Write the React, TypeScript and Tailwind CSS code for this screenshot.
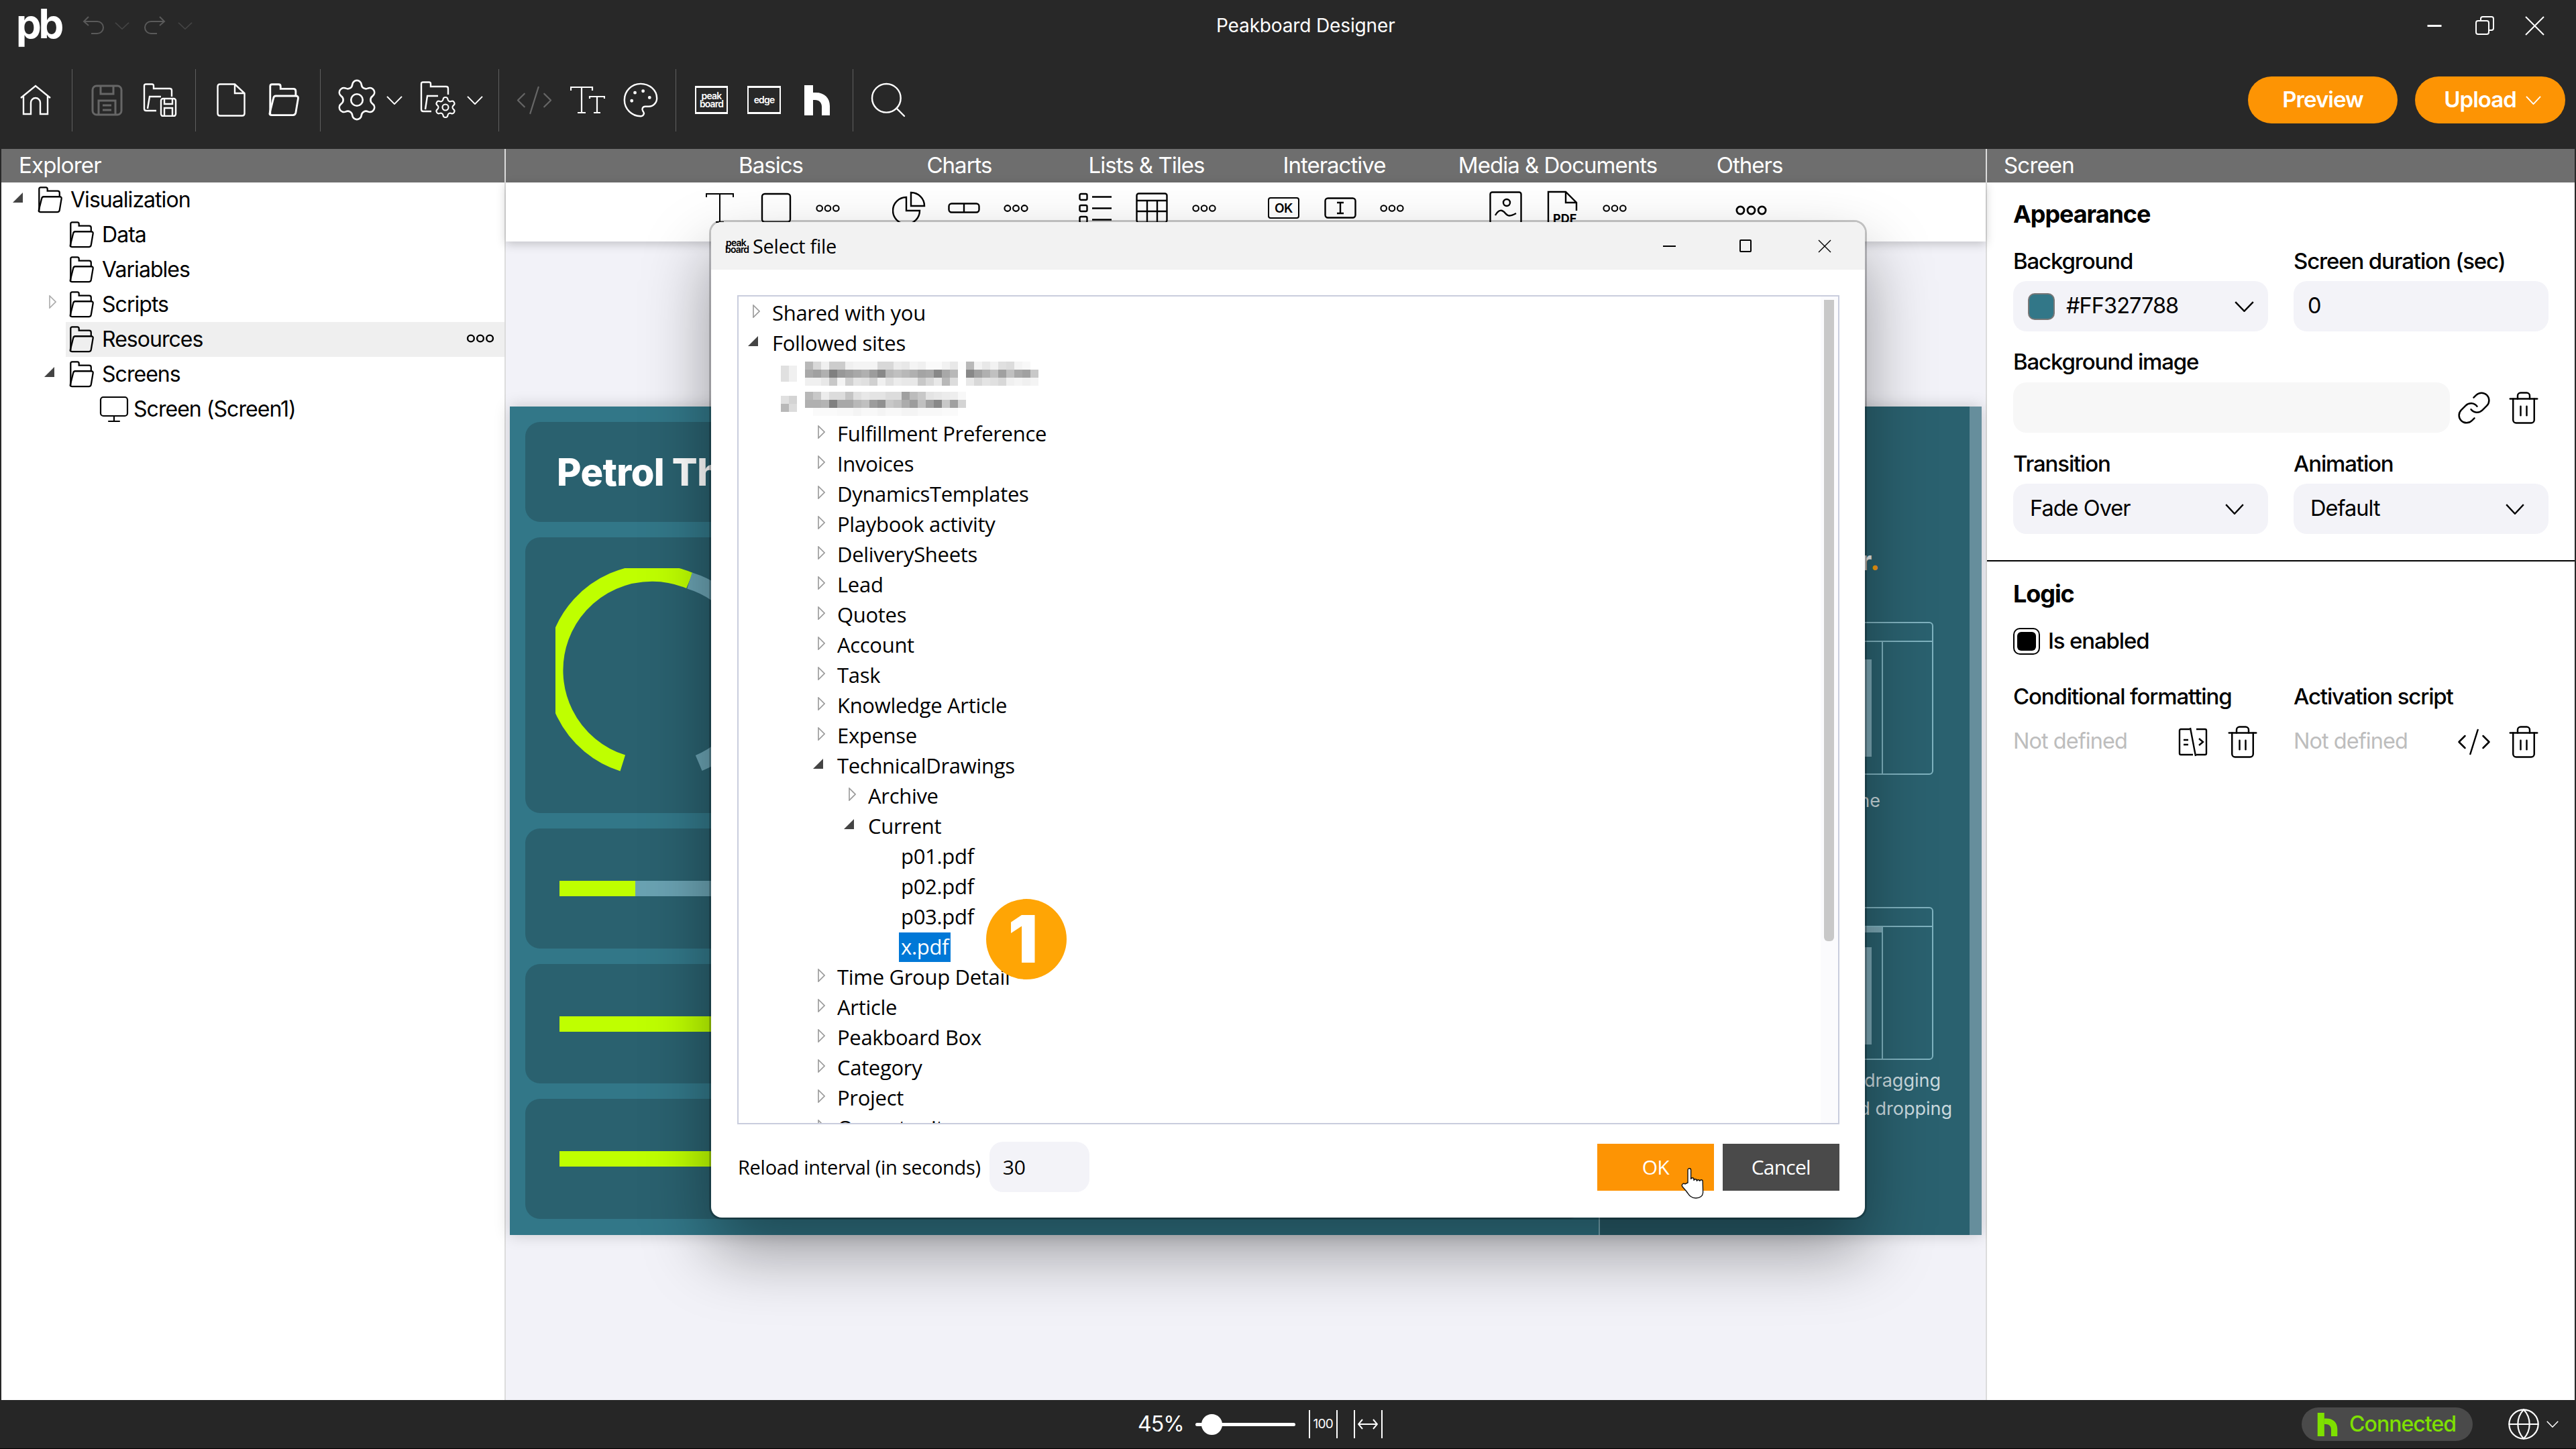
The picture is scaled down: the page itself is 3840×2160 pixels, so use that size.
import { CodeXml, Globe, Link, Monitor, Palette, Search, Settings, Trash2 } from 'lucide-react';

type IconProps = { className?: string };

function Caret({ className = '' }: IconProps) {
  return (
    <svg viewBox="0 0 24 14" fill="none" stroke="currentColor" strokeWidth="2" preserveAspectRatio="none" className={className} aria-hidden>
      <path d="M1 1 L12 13 L23 1" />
    </svg>
  );
}

function FolderIcon({ className = '' }: IconProps) {
  return (
    <svg viewBox="0 0 40 42" fill="none" stroke="currentColor" strokeWidth="2.4" className={className} aria-hidden>
      <path d="M3 39 V4 q0-2.5 2.5-2.5 h8 q2.5 0 2.5 2.5 v3 h16 q3 0 3 3 v6" />
      <path d="M10 16 H35 q3.5 0 3 3 L35 37 q-.6 3-3.5 3 H5 q-3.4 0-2.5-3 L7 19 q.6-3 3-3 Z" />
    </svg>
  );
}

function HLogo({ className = '' }: IconProps) {
  return (
    <svg viewBox="0 0 38 45" fill="currentColor" className={className} aria-hidden>
      <path d="M0 0 H13 V45 H0 Z" />
      <path d="M13 11 H17 C30 11 38 19 38 31 V45 H26 V32 C26 26 22 22 16 22 H13 Z" />
    </svg>
  );
}

function PeakBox({ children }: { children: React.ReactNode }) {
  return (
    <div className="flex h-[42px] w-full flex-col items-center justify-center border-x-2 border-y-[3px] border-white text-center text-[14px] font-semibold leading-[12px] tracking-[-0.06em]">
      {children}
    </div>
  );
}

function Dots({ className = '' }: IconProps) {
  return (
    <svg viewBox="0 0 38 12" fill="none" stroke="currentColor" strokeWidth="2.2" className={className} aria-hidden>
      <ellipse cx="6" cy="6" rx="4.5" ry="4.5" />
      <ellipse cx="19" cy="6" rx="4.5" ry="4.5" />
      <ellipse cx="32" cy="6" rx="4.5" ry="4.5" />
    </svg>
  );
}

function Sep({ className = '' }: IconProps) {
  return <div className={`h-[93px] w-px shrink-0 bg-[#5f5f5f] ${className}`} />;
}

function TopBar() {
  return (
    <div className="h-[222px] shrink-0 bg-[#282828] text-white">
      <div className="flex h-[76px] items-center">
        <div className="ml-[24px] w-[66px] text-[60px] font-bold leading-none tracking-[-0.07em] -translate-y-[3px]">pb</div>
        <svg viewBox="0 0 32 28" fill="none" stroke="#5a5a5a" strokeWidth="2" className="ml-[33px] h-[28px] w-[32px]" aria-hidden>
          <path d="M9 1 L2 8 L9 14 M2 8 H22 a8 8 0 0 1 0 18 H13" />
        </svg>
        <Caret className="ml-[16px] h-[11px] w-[22px] text-[#444]" />
        <svg viewBox="0 0 32 28" fill="none" stroke="#5a5a5a" strokeWidth="2" className="ml-[22px] h-[28px] w-[32px]" aria-hidden>
          <path d="M23 1 L30 8 L23 14 M30 8 H10 a8 8 0 0 0 0 18 H19" />
        </svg>
        <Caret className="ml-[18px] h-[11px] w-[22px] text-[#444]" />
        <div className="ml-[1526px] whitespace-nowrap text-[28px] tracking-[-0.005em]">Peakboard Designer</div>
        <svg viewBox="0 0 28 4" className="ml-auto h-[3px] w-[28px]" fill="currentColor" aria-hidden>
          <rect width="28" height="4" />
        </svg>
        <svg viewBox="0 0 28 28" fill="none" stroke="currentColor" strokeWidth="2" className="ml-[47px] h-[28px] w-[28px]" aria-hidden>
          <rect x="1" y="7" width="19" height="20" rx="3" />
          <path d="M8 7 V4 q0-3 3-3 h13 q3 0 3 3 v14 q0 3-3 3 h-4" />
        </svg>
        <svg viewBox="0 0 29 29" fill="none" stroke="currentColor" strokeWidth="2" className="ml-[46px] mr-[47px] h-[29px] w-[29px]" aria-hidden>
          <path d="M1 1 L28 28 M28 1 L1 28" />
        </svg>
      </div>
      <div className="flex h-[146px] items-center">
        <svg viewBox="0 0 48 46" fill="none" stroke="currentColor" strokeWidth="2.4" className="ml-[29px] h-[46px] w-[48px]" aria-hidden>
          <path d="M2 20 L24 2 L46 20 M6 17 V44 H17 V27 a7 7 0 0 1 14 0 V44 H42 V17" />
        </svg>
        <Sep className="ml-[30px]" />
        <svg viewBox="0 0 47 47" fill="none" stroke="#666" strokeWidth="3" className="ml-[28px] h-[47px] w-[47px]" aria-hidden>
          <rect x="2" y="2" width="43" height="43" rx="6" />
          <path d="M14 2 V14 H33 V2 M11 45 V24 H36 V45 M17 31 H30 M17 38 H30" />
        </svg>
        <svg viewBox="0 0 52 50" fill="none" stroke="currentColor" strokeWidth="2.4" className="ml-[29px] h-[50px] w-[52px]" aria-hidden>
          <path d="M3 38 V4 q0-2.5 2.5-2.5 h9 q2.5 0 2.5 2.5 v4 h24 q3 0 3 3 v9 M3 38 q0 3 3 3 h15 M8 38 L11 20 h17" />
          <rect x="28" y="23" width="22" height="26" rx="3" />
          <path d="M33 23 V31 H45 V23 M33 49 V37 H45 V49" />
        </svg>
        <Sep className="ml-[27px]" />
        <svg viewBox="0 0 43 50" fill="none" stroke="currentColor" strokeWidth="2.4" className="ml-[31px] h-[50px] w-[43px]" aria-hidden>
          <path d="M5 1.5 H27 L41.5 15 V45 q0 3.5-3.5 3.5 H5 q-3.5 0-3.5-3.5 V5 q0-3.5 3.5-3.5 Z M27 1.5 V15 H41.5" />
        </svg>
        <FolderIcon className="ml-[32px] h-[50px] w-[50px]" />
        <Sep className="ml-[29px]" />
        <Settings strokeWidth={0.9} className="ml-[19px] h-[70px] w-[70px]" />
        <Caret className="ml-[9px] h-[13px] w-[24px]" />
        <svg viewBox="0 0 55 56" fill="none" stroke="currentColor" strokeWidth="2.4" className="ml-[25px] h-[56px] w-[55px]" aria-hidden>
          <path d="M3 42 V4 q0-2.5 2.5-2.5 h9 q2.5 0 2.5 2.5 v4 h23 q3 0 3 3 v9 M3 42 q0 3 3 3 h12 M9 42 L12 22 h16" />
          <Settings x={21} y={21} width={36} height={36} strokeWidth={1.4} />
        </svg>
        <Caret className="ml-[16px] h-[13px] w-[24px]" />
        <Sep className="ml-[23px]" />
        <CodeXml strokeWidth={0.9} className="ml-[23px] h-[59px] w-[59px] text-[#666]" />
        <svg viewBox="0 0 52 42" fill="none" stroke="currentColor" strokeWidth="2.2" className="ml-[24px] h-[42px] w-[52px]" aria-hidden>
          <path d="M1 7 V2 H33 V7 M17 2 V40 M11 40 H23 M29 19 V16 H51 V19 M40 16 V40 M35 40 H45" />
        </svg>
        <Palette strokeWidth={1} className="ml-[24px] h-[58px] w-[58px]" />
        <Sep className="ml-[23px]" />
        <div className="ml-[28px] w-[49px]">
          <PeakBox>
            <span>peak</span>
            <span>board</span>
          </PeakBox>
        </div>
        <div className="ml-[29px] w-[50px]">
          <PeakBox>
            <span>edge</span>
          </PeakBox>
        </div>
        <HLogo className="ml-[35px] h-[45px] w-[38px]" />
        <Sep className="ml-[34px]" />
        <Search strokeWidth={0.9} className="ml-[20px] h-[64px] w-[64px]" />
        <button className="ml-auto flex h-[70px] w-[223px] items-center justify-center rounded-full bg-[#fd9404] text-[33px] font-semibold tracking-[-0.03em]">
          Preview
        </button>
        <button className="ml-[26px] mr-[16px] flex h-[70px] w-[224px] items-center justify-center gap-[14px] rounded-full bg-[#fd9404] pl-[7px] text-[33px] font-semibold tracking-[-0.03em]">
          Upload
          <Caret className="h-[13px] w-[23px]" />
        </button>
      </div>
    </div>
  );
}

function ExplorerRow({ label, indent, icon, expand, active }: { label: string; indent: string; icon?: React.ReactNode; expand?: 'open' | 'closed'; active?: boolean }) {
  return (
    <div className={`relative flex h-[52px] items-center ${indent}`}>
      {active && <div className="absolute inset-y-0 left-[96px] right-0 bg-[#efefef]" />}
      <div className="relative flex items-center">
        {expand === 'open' && (
          <svg viewBox="0 0 15 15" className="absolute left-[-36px] top-[13px] h-[15px] w-[15px] fill-[#444]" aria-hidden>
            <path d="M15 0 V15 H0 Z" />
          </svg>
        )}
        {expand === 'closed' && (
          <svg viewBox="0 0 11 20" className="absolute left-[-29px] top-[10px] h-[20px] w-[11px] fill-none stroke-[#aaa]" strokeWidth="1.6" aria-hidden>
            <path d="M1 1 L10 10 L1 19 Z" />
          </svg>
        )}
        {icon ?? <FolderIcon className="h-[40px] w-[39px]" />}
        <span className="ml-[11px] whitespace-nowrap text-[32px] tracking-[-0.03em]">{label}</span>
      </div>
    </div>
  );
}

function Explorer() {
  return (
    <div className="flex w-[750px] shrink-0 flex-col bg-white text-black">
      <div className="flex h-[50px] shrink-0 items-center bg-[#6e6e6e] pl-[26px] text-[33px] tracking-[-0.025em] text-white">Explorer</div>
      <div className="relative">
        <ExplorerRow label="Visualization" indent="pl-[53px]" expand="open" />
        <ExplorerRow label="Data" indent="pl-[100px]" />
        <ExplorerRow label="Variables" indent="pl-[100px]" />
        <ExplorerRow label="Scripts" indent="pl-[100px]" expand="closed" />
        <div className="relative">
          <ExplorerRow label="Resources" indent="pl-[100px]" active />
          <Dots className="absolute right-[15px] top-[18px] h-[13px] w-[42px]" />
        </div>
        <ExplorerRow label="Screens" indent="pl-[100px]" expand="open" />
        <ExplorerRow label="Screen (Screen1)" indent="pl-[144px]" icon={<Monitor strokeWidth={1.1} className="mr-[-6px] h-[48px] w-[48px]" />} />
      </div>
    </div>
  );
}

function WireBox({ thick }: { thick?: boolean }) {
  return (
    <div className="mr-[54px] flex h-[228px] w-[442px] flex-col self-end rounded-[6px] border-2 border-[#7fb2bf]">
      <div className="h-[28px] shrink-0 border-b-2 border-[#7fb2bf]" />
      <div className="flex flex-1">
        <div className={`flex flex-1 items-center justify-end pr-[15px] ${thick ? 'border-t-[8px] border-[#7aa6b3]' : ''}`}>
          <div className="h-[145px] w-[220px] bg-[#7aa6b3]" />
        </div>
        <div className="w-[75px] border-l-2 border-[#7fb2bf]" />
      </div>
    </div>
  );
}

function Preview() {
  return (
    <div className="flex h-[1235px] w-[2194px] bg-[#327788] shadow-[0_0_22px_rgba(0,0,0,0.18)]">
      <div className="flex w-[1623px] shrink-0 flex-col gap-[23px] p-[23px] text-white">
        <div className="flex h-[149px] items-center rounded-[22px] bg-[#2a616f] pl-[47px]">
          <span className="text-[56px] font-extrabold leading-none tracking-[-0.01em]">Petrol Th</span>
        </div>
        <div className="h-[411px] rounded-[22px] bg-[#2a616f] pl-[45px] pt-[46px]">
          <svg viewBox="0 0 314 314" fill="none" strokeWidth="25" className="h-[314px] w-[314px]" aria-hidden>
            <path d="M100.3 290.5 A145 145 0 1 1 200 18.5" stroke="#bfff00" />
            <path d="M200 18.5 A145 145 0 0 1 213.7 290.5" stroke="#6aa2b2" />
          </svg>
        </div>
        <div className="flex h-[179px] items-center rounded-[22px] bg-[#2a616f] pl-[51px]">
          <div className="h-[23px] w-[1400px] bg-[#6aa2b2]">
            <div className="h-full w-[113px] bg-[#bfff00]" />
          </div>
        </div>
        <div className="flex h-[178px] items-center rounded-[22px] bg-[#2a616f] pl-[51px]">
          <div className="h-[23px] w-[1400px] bg-[#bfff00]" />
        </div>
        <div className="flex h-[179px] items-center rounded-[22px] bg-[#2a616f] pl-[51px]">
          <div className="h-[23px] w-[1400px] bg-[#bfff00]" />
        </div>
      </div>
      <div className="flex flex-1 flex-col border-l-2 border-[#7fb2bf] bg-[#2a616f] text-[#c9d9de]">
        <div className="mr-[134px] mt-[206px] self-end text-[40px] font-extrabold leading-[48px] text-[#e6eaeb]">
          Designer<span className="text-[#f39a12]">.</span>
        </div>
        <div className="mt-[67px]" />
        <WireBox />
        <div className="mr-[133px] mt-[22px] self-end text-[27px] leading-[34px]">Outline</div>
        <div className="mt-[141px]" />
        <WireBox thick />
        <div className="mr-[43px] mt-[10px] self-end text-[27px] leading-[42px]">by dragging</div>
        <div className="mr-[26px] self-end text-[27px] leading-[42px]">and dropping</div>
      </div>
      <div className="w-[18px] bg-[#668e9c]" />
    </div>
  );
}

function ToolIcons() {
  return (
    <div className="relative z-10 flex h-[88px] shrink-0 items-center bg-white pb-[12px] text-black shadow-[0_4px_14px_rgba(0,0,0,0.2)]">
      <svg viewBox="0 0 42 46" fill="none" stroke="currentColor" strokeWidth="2" className="ml-[298px] h-[46px] w-[42px]" aria-hidden>
        <path d="M1 7 V2 H41 V7 M21 2 V44 M15 44 H27" />
      </svg>
      <svg viewBox="0 0 46 46" fill="none" stroke="currentColor" strokeWidth="2.4" className="ml-[40px] h-[46px] w-[46px]" aria-hidden>
        <rect x="2" y="2" width="42" height="42" rx="4" />
      </svg>
      <Dots className="ml-[36px] h-[13px] w-[36px]" />
      <svg viewBox="0 0 50 50" fill="none" stroke="currentColor" strokeWidth="2.4" className="ml-[78px] h-[50px] w-[50px]" aria-hidden>
        <path d="M21 9 a20 20 0 1 0 20 20 H21 Z M28 2 a20 20 0 0 1 20 20 H28 Z" />
      </svg>
      <svg viewBox="0 0 48 16" fill="none" stroke="currentColor" strokeWidth="2.4" className="ml-[33px] h-[16px] w-[48px]" aria-hidden>
        <rect x="1.5" y="1.5" width="45" height="13" rx="4" />
        <path d="M24 1.5 V14.5" />
      </svg>
      <Dots className="ml-[35px] h-[13px] w-[37px]" />
      <svg viewBox="0 0 50 46" fill="none" stroke="currentColor" strokeWidth="2.4" className="ml-[75px] h-[46px] w-[50px]" aria-hidden>
        <rect x="1.5" y="2" width="11" height="9" rx="2" />
        <rect x="1.5" y="19" width="11" height="9" rx="2" />
        <rect x="1.5" y="36" width="11" height="9" rx="2" />
        <path d="M20 6.5 H49 M20 23.5 H49 M20 40.5 H49" />
      </svg>
      <svg viewBox="0 0 48 46" fill="none" stroke="currentColor" strokeWidth="2.4" className="ml-[35px] h-[46px] w-[48px]" aria-hidden>
        <rect x="1.5" y="1.5" width="45" height="43" rx="3" />
        <path d="M1.5 12 H46.5 M1.5 28 H46.5 M17 12 V45 M32 12 V45" />
      </svg>
      <Dots className="ml-[36px] h-[13px] w-[36px]" />
      <div className="ml-[77px] flex h-[32px] w-[47px] items-center justify-center rounded-[4px] border-2 border-black text-[19px] font-semibold leading-none tracking-[-0.02em]">OK</div>
      <svg viewBox="0 0 48 32" fill="none" stroke="currentColor" strokeWidth="2.4" className="ml-[37px] h-[32px] w-[48px]" aria-hidden>
        <rect x="1.5" y="1.5" width="45" height="29" rx="4" />
        <path d="M19 8 H29 M24 8 V24 M19 24 H29" />
      </svg>
      <Dots className="ml-[35px] h-[13px] w-[36px]" />
      <svg viewBox="0 0 49 50" fill="none" stroke="currentColor" strokeWidth="2.4" className="ml-[127px] h-[50px] w-[49px]" aria-hidden>
        <rect x="1.5" y="1.5" width="46" height="47" rx="3" />
        <circle cx="26" cy="17" r="5" />
        <path d="M9 36 C14 27 19 27 24 33 S34 36 40 33" />
      </svg>
      <svg viewBox="0 0 47 52" fill="none" stroke="currentColor" strokeWidth="2.4" className="ml-[36px] h-[52px] w-[47px]" aria-hidden>
        <path d="M3 50 V2 H29 L45 18 V30 M29 2 V18 H45" />
        <text x="10" y="48" fontSize="18" fontWeight="700" fill="currentColor" stroke="none">PDF</text>
      </svg>
      <Dots className="ml-[37px] h-[13px] w-[36px]" />
      <Dots className="ml-[162px] h-[15px] w-[47px] translate-y-[3px]" />
    </div>
  );
}

function Center() {
  return (
    <div className="flex min-w-0 flex-1 flex-col border-x-2 border-[#dcdcdc]">
      <div className="relative z-10 flex h-[50px] shrink-0 items-center bg-[#6e6e6e] text-[33px] tracking-[-0.03em] text-white">
        <span className="ml-[345px] w-[100px] text-center">Basics</span>
        <span className="ml-[181px] w-[100px] text-center">Charts</span>
        <span className="ml-[139px] w-[180px] text-center">Lists &amp; Tiles</span>
        <span className="ml-[110px] w-[160px] text-center">Interactive</span>
        <span className="ml-[103px] w-[300px] whitespace-nowrap text-center">Media &amp; Documents</span>
        <span className="ml-[86px] w-[100px] text-center">Others</span>
      </div>
      <ToolIcons />
      <div className="flex flex-1 justify-center bg-[#f2f2f8] pt-[246px]">
        <Preview />
      </div>
    </div>
  );
}

function Field({ label, children }: { label: string; children: React.ReactNode }) {
  return (
    <div>
      <div className="whitespace-nowrap text-[33px] font-medium leading-[38px] tracking-[-0.035em]">{label}</div>
      {children}
    </div>
  );
}

function SelectBox({ text }: { text: string }) {
  return (
    <div className="mt-[11px] flex h-[75px] items-center justify-between rounded-[20px] bg-[#f3f3f8] pl-[25px] pr-[36px] text-[32.5px] tracking-[-0.03em]">
      {text}
      <Caret className="h-[16px] w-[28px]" />
    </div>
  );
}

function Inspector() {
  return (
    <div className="flex w-[876px] shrink-0 flex-col bg-white text-black">
      <div className="flex h-[50px] shrink-0 items-center bg-[#6e6e6e] pl-[25px] text-[33px] tracking-[-0.025em] text-white">Screen</div>
      <div className="flex h-[565px] flex-col border-b-2 border-black px-[39px] pt-[27px]">
        <div className="text-[36px] font-bold leading-[40px] tracking-[-0.03em]">Appearance</div>
        <div className="mt-[31px] grid w-[798px] grid-cols-[380px_380px] gap-x-[38px]">
          <Field label="Background">
            <div className="mt-[11px] flex h-[75px] items-center rounded-[20px] bg-[#f3f3f8] pl-[22px] pr-[21px] text-[32.5px] tracking-[-0.03em]">
              <div className="h-[40px] w-[40px] rounded-[10px] border-2 border-[#777] bg-[#327788]" />
              <span className="ml-[17px]">#FF327788</span>
              <Caret className="ml-auto h-[16px] w-[29px]" />
            </div>
          </Field>
          <Field label="Screen duration (sec)">
            <div className="mt-[11px] flex h-[75px] items-center rounded-[20px] bg-[#f3f3f8] pl-[21px] text-[32.5px]">0</div>
          </Field>
        </div>
        <div className="mt-[26px]">
          <Field label="Background image">
            <div className="mt-[12px] flex items-center">
              <div className="h-[75px] w-[651px] rounded-[20px] bg-[#f7f7f7]" />
              <Link strokeWidth={1.1} className="ml-[9px] h-[54px] w-[54px]" />
              <Trash2 strokeWidth={1.1} className="ml-[20px] h-[54px] w-[54px]" />
            </div>
          </Field>
        </div>
        <div className="mt-[27px] grid w-[798px] grid-cols-[380px_380px] gap-x-[38px]">
          <Field label="Transition">
            <SelectBox text="Fade Over" />
          </Field>
          <Field label="Animation">
            <SelectBox text="Default" />
          </Field>
        </div>
      </div>
      <div className="px-[39px] pt-[28px]">
        <div className="text-[36px] font-bold leading-[40px] tracking-[-0.03em]">Logic</div>
        <div className="mt-[26px] flex items-center">
          <div className="flex h-[40px] w-[40px] items-center justify-center rounded-[10px] border-2 border-black">
            <div className="h-[28px] w-[28px] rounded-[6px] bg-black" />
          </div>
          <span className="ml-[12px] text-[33px] font-medium tracking-[-0.035em]">Is enabled</span>
        </div>
        <div className="mt-[38px] grid w-[798px] grid-cols-[380px_380px] gap-x-[38px]">
          <Field label="Conditional formatting">
            <div className="mt-[22px] flex items-center text-[32.5px] tracking-[-0.03em] text-[#bdbdbd]">
              <span className="w-[246px]">Not defined</span>
              <svg viewBox="0 0 44 44" fill="none" stroke="black" strokeWidth="2.4" className="h-[44px] w-[44px]" aria-hidden>
                <path d="M17 3 H4 q-2 0-2 2 V39 q0 2 2 2 H22 M27 3 H40 q2 0 2 2 V39 q0 2-2 2 H27 M18 1 L26 43 M8 19 H15 M8 26 H15 M31 17 L37 22 L31 27" />
              </svg>
              <Trash2 strokeWidth={1.1} className="ml-[25px] h-[54px] w-[54px] text-black" />
            </div>
          </Field>
          <Field label="Activation script">
            <div className="mt-[22px] flex items-center text-[32.5px] tracking-[-0.03em] text-[#bdbdbd]">
              <span className="w-[242px]">Not defined</span>
              <CodeXml strokeWidth={1.1} className="h-[54px] w-[54px] text-black" />
              <Trash2 strokeWidth={1.1} className="ml-[20px] h-[54px] w-[54px] text-black" />
            </div>
          </Field>
        </div>
      </div>
    </div>
  );
}

function BottomBar() {
  return (
    <div className="flex h-[73px] shrink-0 items-center border-b border-black bg-[#262626] text-white">
      <span className="ml-[1696px] text-[32px] tracking-[-0.03em]">45%</span>
      <div className="relative ml-[17px] h-[5px] w-[149px] rounded-full bg-white">
        <div className="absolute left-[9px] top-[-13px] h-[31px] w-[31px] rounded-full bg-white" />
      </div>
      <div className="ml-[20px] flex h-[42px] w-[43px] items-center justify-center border-x-2 border-white text-[19px] tracking-[-0.04em]">100</div>
      <div className="ml-[24px] flex h-[42px] w-[43px] items-center justify-center border-x-2 border-white">
        <svg viewBox="0 0 30 16" fill="none" stroke="white" strokeWidth="2" className="h-[16px] w-[30px]" aria-hidden>
          <path d="M7 1 L1 8 L7 15 M23 1 L29 8 L23 15 M1 8 H29" />
        </svg>
      </div>
      <div className="ml-auto flex h-[50px] w-[255px] items-center rounded-full bg-[#4a4a4a] pl-[22px] text-[#7ee000]">
        <HLogo className="h-[35px] w-[33px]" />
        <span className="ml-[16px] text-[32px] font-medium tracking-[-0.03em]">Connected</span>
      </div>
      <Globe strokeWidth={1} className="ml-[50px] h-[52px] w-[52px]" />
      <Caret className="ml-[8px] mr-[26px] h-[10px] w-[18px]" />
    </div>
  );
}

function Triangle({ open }: { open?: boolean }) {
  if (open) {
    return (
      <svg viewBox="0 0 15 15" className="mb-[6px] mr-[21px] h-[15px] w-[15px] fill-[#444]" aria-hidden>
        <path d="M15 0 V15 H0 Z" />
      </svg>
    );
  }
  return (
    <svg viewBox="0 0 11 20" className="mb-[6px] mr-[18px] h-[20px] w-[11px] fill-none stroke-[#999]" strokeWidth="1.6" aria-hidden>
      <path d="M1 1 L10 10 L1 19 Z" />
    </svg>
  );
}

type TreeItem = { label: string; level: number; state?: 'open' | 'closed' };

const treeTop: TreeItem[] = [
  { label: 'Shared with you', level: 0, state: 'closed' },
  { label: 'Followed sites', level: 0, state: 'open' },
];

const treeRest: TreeItem[] = [
  { label: 'Fulfillment Preference', level: 1, state: 'closed' },
  { label: 'Invoices', level: 1, state: 'closed' },
  { label: 'DynamicsTemplates', level: 1, state: 'closed' },
  { label: 'Playbook activity', level: 1, state: 'closed' },
  { label: 'DeliverySheets', level: 1, state: 'closed' },
  { label: 'Lead', level: 1, state: 'closed' },
  { label: 'Quotes', level: 1, state: 'closed' },
  { label: 'Account', level: 1, state: 'closed' },
  { label: 'Task', level: 1, state: 'closed' },
  { label: 'Knowledge Article', level: 1, state: 'closed' },
  { label: 'Expense', level: 1, state: 'closed' },
  { label: 'TechnicalDrawings', level: 1, state: 'open' },
  { label: 'Archive', level: 2, state: 'closed' },
  { label: 'Current', level: 2, state: 'open' },
  { label: 'p01.pdf', level: 3 },
  { label: 'p02.pdf', level: 3 },
  { label: 'p03.pdf', level: 3 },
];

const treeEnd: TreeItem[] = [
  { label: 'Time Group Detail', level: 1, state: 'closed' },
  { label: 'Article', level: 1, state: 'closed' },
  { label: 'Peakboard Box', level: 1, state: 'closed' },
  { label: 'Category', level: 1, state: 'closed' },
  { label: 'Project', level: 1, state: 'closed' },
  { label: 'Opportunity', level: 1, state: 'closed' },
];

const spacers = ['w-[50px]', 'w-[147px]', 'w-[193px]', 'w-[242px]'];

function TreeRow({ label, level, state }: TreeItem) {
  return (
    <div className="flex h-[45px] shrink-0 items-center">
      <div className={`flex shrink-0 items-center justify-end ${spacers[level]}`}>{state && <Triangle open={state === 'open'} />}</div>
      <span className="whitespace-nowrap">{label}</span>
    </div>
  );
}

// censored names in the list, taken from the mosaic of the picture
const mosaicA = [
  ['b8', 'd8', 'f0', 'cc', 'cc', 'f0', 'f4', 'f4', 'f4', 'd8', 'd8', 'ec', 'e8', 'f4', 'f0', 'fa', 'fa', 'f2', 'e8', 'fc', 'b8', 'f2', 'e8', 'f2', 'e0', 'dc', 'f4', 'f8', 'ff'],
  ['a8', 'a0', 'b0', '80', '98', 'a0', 'a8', 'b0', '9c', '88', 'b8', 'c0', 'b8', 'b0', 'a4', 'a8', '88', 'a8', 'b8', 'ff', '88', 'a0', 'b0', 'c0', 'a0', 'c0', 'a8', 'a0', 'c8'],
  ['f0', 'f0', 'e8', 'c8', 'f4', 'd0', 'e4', 'e0', 'd0', 'f0', 'e0', 'ec', 'e8', 'e8', 'c8', 'd8', 'e8', 'b8', 'dc', 'ff', 'e8', 'd8', 'e4', 'e0', 'd8', 'f0', 'f4', 'f0', 'f4'],
];

const mosaicB = [
  ['b8', 'c8', 'ec', 'dc', 'dc', 'c4', 'e0', 'e8', 'e4', 'e4', 'dc', 'dc', 'a0', 'bc', 'c8', 'e4', 'e8', 'ec', 'ee', 'f8'],
  ['b0', 'b0', 'b4', '80', 'a8', 'a8', 'b8', 'c0', '9c', '90', 'c8', 'c0', 'ac', '9c', 'c0', 'a0', '88', 'c8', 'a0', 'd4'],
  ['ff', 'fa', 'fa', 'fa', 'f8', 'f8', 'f4', 'f8', 'f8', 'f4', 'f8', 'f8', 'f4', 'f4', 'f8', 'f8', 'f8', 'fa', 'fa', 'ff'],
];

function Mosaic({ cells }: { cells: string[][] }) {
  return (
    <div className="flex flex-col">
      {cells.map((row, r) => (
        <div key={r} className="flex h-[12px]">
          {row.map((c, i) => (
            <div key={i} className="h-[12px] w-[12px]" style={{ backgroundColor: `#${c}${c}${c}` }} />
          ))}
        </div>
      ))}
    </div>
  );
}

function MosaicRow({ cells, icon }: { cells: string[][]; icon: string[][] }) {
  return (
    <div className="flex h-[45px] shrink-0 items-center pl-[63px]">
      <Mosaic cells={icon} />
      <div className="ml-[12px]">
        <Mosaic cells={cells} />
      </div>
    </div>
  );
}

function Dialog() {
  return (
    <div className="absolute left-[1060px] top-[331px] z-20 flex h-[1484px] w-[1720px] flex-col overflow-hidden rounded-[16px] bg-white font-['Open_Sans',sans-serif] text-[31px] tracking-[-0.01em] text-black shadow-[0_0_0_3px_rgba(0,0,0,0.22)]">
      <div className="flex h-[71px] shrink-0 items-center bg-[#f2f2f2]">
        <div className="ml-[21px] w-[32px] text-center font-['Inter',sans-serif] text-[14px] font-semibold leading-[10px] tracking-[-0.06em]">
          peak
          <br />
          board
        </div>
        <span className="ml-[9px] text-[29px] tracking-[-0.01em]">Select file</span>
        <div className="ml-auto h-[2px] w-[19px] bg-black" />
        <div className="ml-[95px] h-[19px] w-[18px] rounded-[2px] border-2 border-black" />
        <svg viewBox="0 0 20 20" fill="none" stroke="black" strokeWidth="1.4" className="ml-[99px] mr-[50px] h-[20px] w-[20px]" aria-hidden>
          <path d="M1 1 L19 19 M19 1 L1 19" />
        </svg>
      </div>
      <div className="relative ml-[39px] mt-[38px] flex h-[1236px] w-[1643px] shrink-0 flex-col overflow-hidden border-2 border-[#c9cddd] pt-[2px]">
        {treeTop.map((t) => (
          <TreeRow key={t.label} {...t} />
        ))}
        <MosaicRow cells={mosaicA} icon={[['e0', 'f0'], ['e0', 'f0']]} />
        <MosaicRow cells={mosaicB} icon={[['e0', 'd4'], ['b8', 'dc']]} />
        {treeRest.map((t) => (
          <TreeRow key={t.label} {...t} />
        ))}
        <div className="flex h-[45px] shrink-0 items-center pl-[239px]">
          <span className="flex h-[44px] items-center bg-[#0078d7] px-[3px] text-white">x.pdf</span>
        </div>
        {treeEnd.map((t) => (
          <TreeRow key={t.label} {...t} />
        ))}
        <div className="absolute inset-y-0 right-0 w-[26px] bg-[#fbfbfd]">
          <div className="ml-[5px] mt-[5px] h-[956px] w-[15px] rounded-b-[6px] bg-[#c8c8c8]" />
        </div>
      </div>
      <div className="ml-[40px] mt-[26px] flex h-[75px] items-center">
        <span className="whitespace-nowrap text-[29px] tracking-[-0.01em]">Reload interval (in seconds)</span>
        <div className="ml-[13px] flex h-[75px] w-[149px] items-center rounded-[20px] bg-[#f3f3f8] pl-[20px] text-[30px]">30</div>
        <button className="ml-[757px] h-[70px] w-[174px] bg-[#fd9404] text-[30px] tracking-[-0.025em] text-white">OK</button>
        <button className="ml-[13px] h-[70px] w-[174px] bg-[#4a4a4a] text-[30px] tracking-[-0.025em] text-white">Cancel</button>
      </div>
    </div>
  );
}

export default function App() {
  return (
    <div className="relative flex h-[2160px] w-[3840px] flex-col overflow-hidden bg-[#282828] font-['Inter',sans-serif]">
      <TopBar />
      <div className="flex min-h-0 flex-1 px-[2px]">
        <Explorer />
        <Center />
        <Inspector />
      </div>
      <BottomBar />
      {/* dialog throws a wide soft shadow over the canvas */}
      <div className="absolute left-[1060px] top-[331px] z-10 h-[1484px] w-[1720px] rounded-[16px] shadow-[0_50px_100px_rgba(0,0,0,0.38)]" />
      <Dialog />
      <div className="absolute left-[1470px] top-[1340px] z-30 flex h-[120px] w-[120px] items-center justify-center rounded-full bg-[#ffa505] pr-[10px] text-[98px] font-black leading-none text-white">1</div>
      <svg viewBox="0 0 34 46" className="absolute left-[2506px] top-[1741px] z-30 h-[46px] w-[34px]" fill="white" stroke="#111" strokeWidth="1.4" aria-hidden>
        <path d="M10 22 V3 a2.3 2.3 0 0 1 4.6 0 V17 a2.2 2.2 0 0 1 4.4 0 V19 a2.2 2.2 0 0 1 4.4 0 V20 a2.2 2.2 0 0 1 4.4 0 a2.2 2.2 0 0 1 4.4 0 L32.6 36 C32.6 42 28 45 22 45 C15 45 12 41 8 35 L2 28 C0 25 3 22 6 24 Z" />
      </svg>
    </div>
  );
}
